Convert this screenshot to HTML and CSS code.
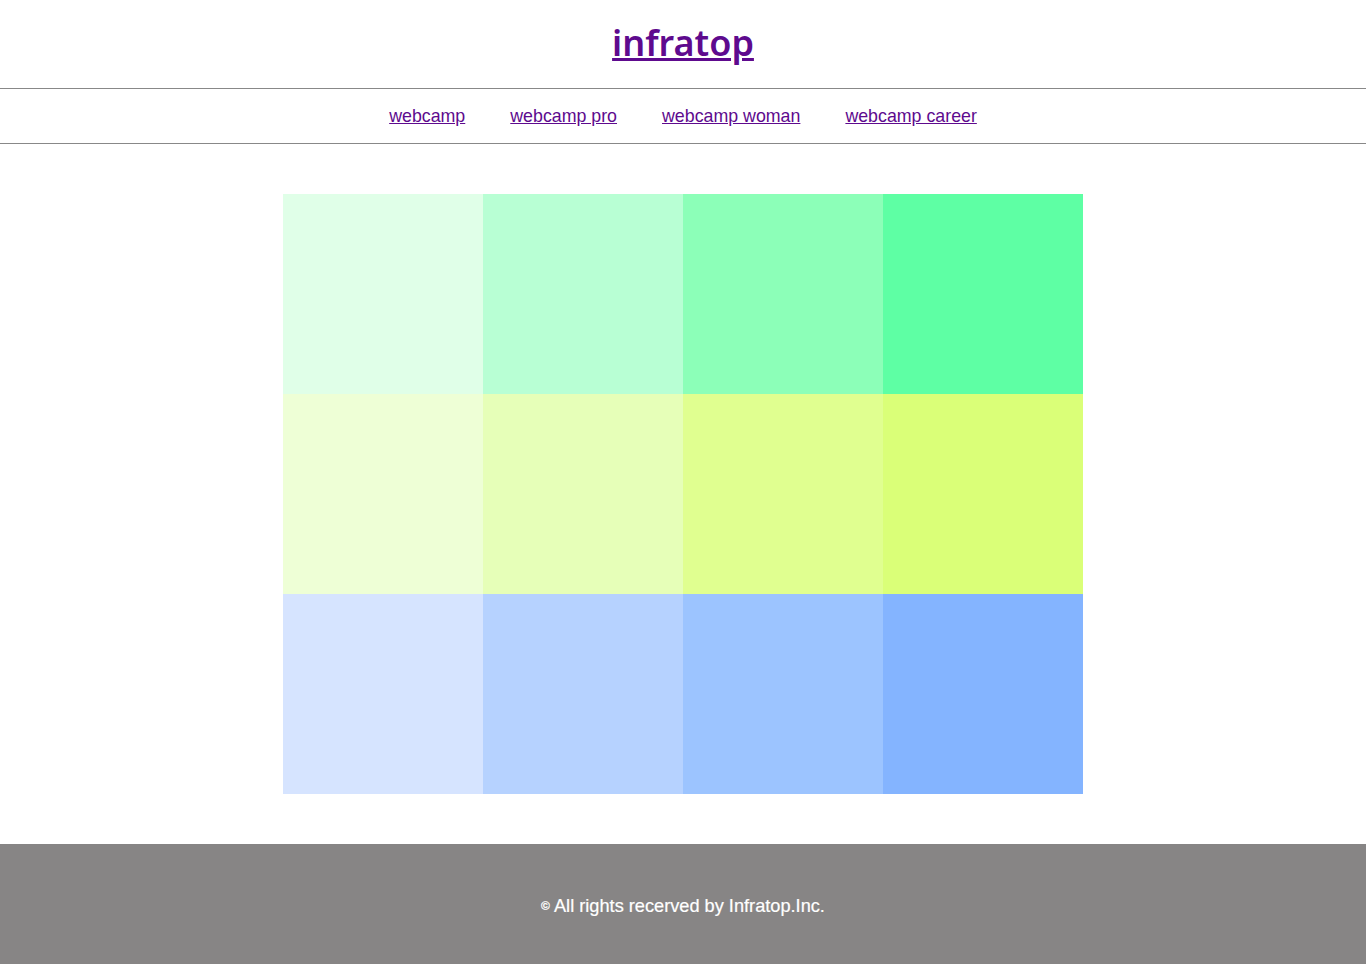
FILE: index.html
```html
<!DOCTYPE html>
<html lang="ja">
<head>
<meta charset="utf-8">
<title>infratop</title>
<link rel="stylesheet" href="styles.css">
</head>
<body>
<header class="header">
  <h1 class="logo"><a href="#">infratop</a></h1>
</header>
<nav class="nav">
  <a href="#">webcamp</a>
  <a href="#">webcamp pro</a>
  <a href="#">webcamp woman</a>
  <a href="#">webcamp career</a>
</nav>
<main class="main">
  <div class="grid">
    <div class="cell g1"></div><div class="cell g2"></div><div class="cell g3"></div><div class="cell g4"></div>
    <div class="cell y1"></div><div class="cell y2"></div><div class="cell y3"></div><div class="cell y4"></div>
    <div class="cell b1"></div><div class="cell b2"></div><div class="cell b3"></div><div class="cell b4"></div>
  </div>
</main>
<footer class="footer">
  <p><span class="copy">©</span> All rights recerved by Infratop.Inc.</p>
</footer>
</body>
</html>
```
FILE: styles.css
```css
* { box-sizing: border-box; }
html, body { margin: 0; padding: 0; }
body { font-family: "Liberation Sans", Arial, sans-serif; background: #fff; }
a { color: #5e0a8e; }

.header {
  height: 89px;
  display: flex;
  align-items: center;
  justify-content: center;
  border-bottom: 1px solid #888;
}
.logo {
  margin: 0;
  font-family: "Noto Sans", sans-serif;
  font-size: 36px;
  font-weight: 600;
  line-height: 1;
  padding-bottom: 2px;
}
.nav {
  height: 55px;
  display: flex;
  align-items: center;
  justify-content: center;
  gap: 45px;
  border-bottom: 1px solid #888;
  font-size: 17.8px;
}
.main {
  padding: 50px 0;
  display: flex;
  justify-content: center;
}
.grid {
  display: grid;
  grid-template-columns: repeat(4, 200px);
  grid-auto-rows: 200px;
}
.g1 { background: #e0ffe8; }
.g2 { background: #b8ffd4; }
.g3 { background: #8cffb8; }
.g4 { background: #5effa4; }
.y1 { background: #eeffd6; }
.y2 { background: #e6ffb8; }
.y3 { background: #e0ff90; }
.y4 { background: #daff78; }
.b1 { background: #d6e4ff; }
.b2 { background: #b6d2ff; }
.b3 { background: #9cc4ff; }
.b4 { background: #84b4ff; }

.footer {
  height: 120px;
  background: #878585;
  color: #fff;
  display: flex;
  align-items: center;
  justify-content: center;
}
.footer p {
  margin: 0;
  font-size: 18.2px;
  padding-top: 4px;
  -webkit-text-stroke: 0.2px #fff;
}
.copy { font-size: 12px; vertical-align: 2px; font-weight: 700; }
```
